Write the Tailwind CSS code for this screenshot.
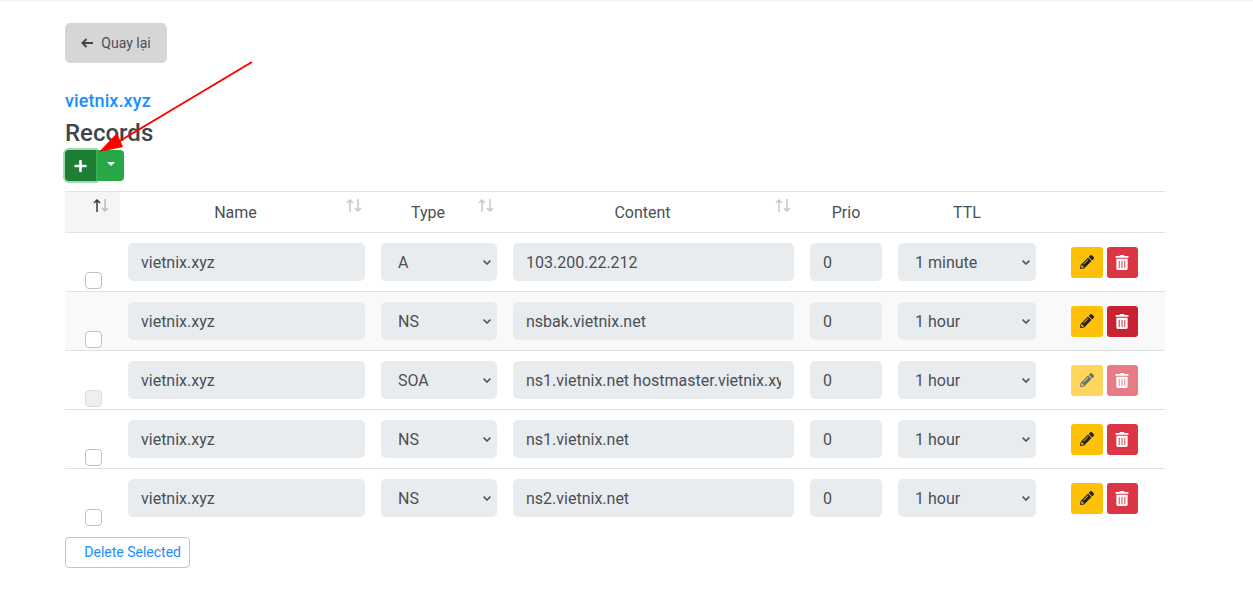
<!doctype html>
<html><head><meta charset="utf-8"><title>Records</title>
<script src="https://cdn.jsdelivr.net/npm/@tailwindcss/browser@4"></script></head>
<body class="bg-white font-['Roboto',sans-serif] text-[16px] text-[#495057] overflow-hidden">
<div class="relative h-[616px] w-[1253px] border-t border-[#f2f2f2] pl-[65px] pr-[88px] pt-[22px]">
  <a class="flex h-10 w-[102px] items-center justify-center gap-[8px] rounded-[5px] border border-[#d6d6d6] bg-[#d6d6d6] text-[14px] text-[#495057]">
    <svg class="h-3 w-3" viewBox="0 0 12 12" fill="none" stroke="#3f464c" stroke-width="2"><path d="M12 6H1.5M5.5 2 1.5 6l4 4"/></svg>
    Quay lại</a>
  <div class="mt-[27px] h-[22px] text-[18px] font-medium leading-[22px] tracking-[0.1px] text-[#1890ff]">vietnix.xyz</div>
  <h2 class="mt-[7px] h-[29px] text-[24px] font-medium leading-[29px] text-[#3e464c]">Records</h2>
  <div class="mt-[2px] flex h-[31px] w-[59px]">
    <button class="z-10 flex h-[31px] w-[31px] items-center justify-center rounded-l-[4px] bg-[#1e7e34] pr-[1px] shadow-[0_0_0_2px_rgba(72,180,97,0.5)]">
      <svg class="h-[14px] w-[13px]" viewBox="0 0 448 512" fill="#fff"><path d="M416 208H272V64c0-17.67-14.33-32-32-32h-32c-17.67 0-32 14.33-32 32v144H32c-17.67 0-32 14.33-32 32v32c0 17.67 14.33 32 32 32h144v144c0 17.67 14.33 32 32 32h32c17.67 0 32-14.33 32-32V304h144c17.67 0 32-14.33 32-32v-32c0-17.67-14.33-32-32-32z"/></svg>
    </button>
    <button class="flex h-[31px] w-[28px] items-center justify-center rounded-r-[4px] bg-[#28a745] pb-[3px] pl-[1px]">
      <span class="h-0 w-0 border-x-[4px] border-t-[4px] border-x-transparent border-t-white"></span>
    </button>
  </div>
  <table class="mt-[10px] w-[1100px] table-fixed border-collapse text-[16px]">
    <colgroup><col class="w-[55px]"><col class="w-[253px]"><col class="w-[132px]"><col class="w-[297px]"><col class="w-[88px]"><col class="w-[154px]"><col class="w-[121px]"></colgroup>
    <thead>
      <tr class="h-[41px] border-y border-[#dee2e6] text-[#495057]">
        <th class="relative bg-[#f5f5f5] font-normal"><svg class="absolute left-[28px] top-[7px]" width="16" height="13" viewBox="0 0 16 13" fill="none" stroke-width="1.5"><path d="M4 13V1M1 4l3-3 3 3" stroke="#343a40"/><path d="M12 0v12M9 9l3 3 3-3" stroke="#bdbdbd"/></svg></th>
        <th class="relative pt-[2px] pr-[22px] font-normal">Name<svg class="absolute left-[226px] top-[7px]" width="16" height="13" viewBox="0 0 16 13" fill="none" stroke="#c8c8c8" stroke-width="1.5"><path d="M4 13V1M1 4l3-3 3 3M12 0v12M9 9l3 3 3-3"/></svg></th>
        <th class="relative pt-[2px] pr-[22px] font-normal">Type<svg class="absolute left-[105px] top-[7px]" width="16" height="13" viewBox="0 0 16 13" fill="none" stroke="#c8c8c8" stroke-width="1.5"><path d="M4 13V1M1 4l3-3 3 3M12 0v12M9 9l3 3 3-3"/></svg></th>
        <th class="relative pt-[2px] pr-[22px] font-normal">Content<svg class="absolute left-[270px] top-[7px]" width="16" height="13" viewBox="0 0 16 13" fill="none" stroke="#c8c8c8" stroke-width="1.5"><path d="M4 13V1M1 4l3-3 3 3M12 0v12M9 9l3 3 3-3"/></svg></th>
        <th class="pt-[2px] font-normal">Prio</th>
        <th class="pt-[2px] font-normal">TTL</th>
        <th></th>
      </tr>
    </thead>
    <tbody>
      <tr class="h-[59px] border-b border-[#dee2e6]">
        <td class="pb-[2px] pl-[20px] align-bottom"><input type="checkbox" class="block h-[17px] w-[17px] appearance-none rounded-[4px] border border-[#bdc1c5] bg-white"></td>
        <td class="px-2"><input value="vietnix.xyz" class="h-[38px] w-full rounded-[5px] bg-[#e9ecef] px-[13px] text-[#495057]"></td>
        <td class="px-2"><div class="relative"><select class="h-[38px] w-full appearance-none rounded-[5px] bg-[#e9ecef] pl-[17px] pt-[2px] text-[#495057]"><option>A</option></select><svg class="pointer-events-none absolute right-[6px] top-[17px] h-[5px] w-2" viewBox="0 0 8 5" fill="none" stroke="#495057" stroke-width="1.5"><path d="M.6.6 4 4l3.4-3.4"/></svg></div></td>
        <td class="px-2"><input value="103.200.22.212" class="h-[38px] w-full rounded-[5px] bg-[#e9ecef] px-[13px] text-[#495057]"></td>
        <td class="px-2"><input value="0" class="h-[38px] w-full rounded-[5px] bg-[#e9ecef] px-[13px] text-[#495057]"></td>
        <td class="px-2"><div class="relative"><select class="h-[38px] w-full appearance-none rounded-[5px] bg-[#e9ecef] pl-[17px] pt-[2px] text-[#495057]"><option>1 minute</option></select><svg class="pointer-events-none absolute right-[6px] top-[17px] h-[5px] w-2" viewBox="0 0 8 5" fill="none" stroke="#495057" stroke-width="1.5"><path d="M.6.6 4 4l3.4-3.4"/></svg></div></td>
        <td class="pl-[27px]"><div class="flex gap-[4px]">
          <button class="flex h-[31px] w-8 items-center justify-center rounded-[3px] bg-[#ffc107]"><svg class="h-[14px] w-[14px]" viewBox="0 0 512 512" fill="#212529"><path d="M497.9 142.1l-46.1 46.1c-4.7 4.7-12.3 4.7-17 0l-111-111c-4.7-4.7-4.7-12.3 0-17l46.1-46.1c18.7-18.7 49.1-18.7 67.9 0l60.1 60.1c18.8 18.7 18.8 49.1 0 67.9zM284.2 99.8L21.6 362.4.4 483.9c-2.9 16.4 11.4 30.6 27.8 27.8l121.5-21.3 262.6-262.6c4.7-4.7 4.7-12.3 0-17l-111-111c-4.8-4.7-12.4-4.7-17.1 0zM124.1 339.9c-5.5-5.5-5.5-14.3 0-19.8l154-154c5.5-5.5 14.3-5.5 19.8 0s5.5 14.3 0 19.8l-154 154c-5.5 5.5-14.3 5.5-19.8 0zM88 424h48v36.3l-64.5 11.3-31.1-31.1L51.7 376H88v48z"/></svg></button>
          <button class="flex h-[31px] w-[31px] items-center justify-center rounded-[3px] bg-[#dc3545] pr-[1px]"><svg class="h-[15px] w-[14px]" viewBox="0 0 448 512" fill="#fff"><path d="M32 464a48 48 0 0 0 48 48h288a48 48 0 0 0 48-48V128H32zm272-256a16 16 0 0 1 32 0v224a16 16 0 0 1-32 0zm-96 0a16 16 0 0 1 32 0v224a16 16 0 0 1-32 0zm-96 0a16 16 0 0 1 32 0v224a16 16 0 0 1-32 0zM432 32H312l-9.4-18.7A24 24 0 0 0 281.1 0H166.8a23.72 23.72 0 0 0-21.4 13.3L136 32H16A16 16 0 0 0 0 48v32a16 16 0 0 0 16 16h416a16 16 0 0 0 16-16V48a16 16 0 0 0-16-16z"/></svg></button>
        </div></td>
      </tr>
      <tr class="h-[59px] border-b border-[#dee2e6] bg-[#f9f9f9]">
        <td class="pb-[2px] pl-[20px] align-bottom"><input type="checkbox" class="block h-[17px] w-[17px] appearance-none rounded-[4px] border border-[#bdc1c5] bg-white"></td>
        <td class="px-2"><input value="vietnix.xyz" class="h-[38px] w-full rounded-[5px] bg-[#e9ecef] px-[13px] text-[#495057]"></td>
        <td class="px-2"><div class="relative"><select class="h-[38px] w-full appearance-none rounded-[5px] bg-[#e9ecef] pl-[17px] pt-[2px] text-[#495057]"><option>NS</option></select><svg class="pointer-events-none absolute right-[6px] top-[17px] h-[5px] w-2" viewBox="0 0 8 5" fill="none" stroke="#495057" stroke-width="1.5"><path d="M.6.6 4 4l3.4-3.4"/></svg></div></td>
        <td class="px-2"><input value="nsbak.vietnix.net" class="h-[38px] w-full rounded-[5px] bg-[#e9ecef] px-[13px] text-[#495057]"></td>
        <td class="px-2"><input value="0" class="h-[38px] w-full rounded-[5px] bg-[#e9ecef] px-[13px] text-[#495057]"></td>
        <td class="px-2"><div class="relative"><select class="h-[38px] w-full appearance-none rounded-[5px] bg-[#e9ecef] pl-[17px] pt-[2px] text-[#495057]"><option>1 hour</option></select><svg class="pointer-events-none absolute right-[6px] top-[17px] h-[5px] w-2" viewBox="0 0 8 5" fill="none" stroke="#495057" stroke-width="1.5"><path d="M.6.6 4 4l3.4-3.4"/></svg></div></td>
        <td class="pl-[27px]"><div class="flex gap-[4px]">
          <button class="flex h-[31px] w-8 items-center justify-center rounded-[3px] bg-[#ffc107]"><svg class="h-[14px] w-[14px]" viewBox="0 0 512 512" fill="#212529"><path d="M497.9 142.1l-46.1 46.1c-4.7 4.7-12.3 4.7-17 0l-111-111c-4.7-4.7-4.7-12.3 0-17l46.1-46.1c18.7-18.7 49.1-18.7 67.9 0l60.1 60.1c18.8 18.7 18.8 49.1 0 67.9zM284.2 99.8L21.6 362.4.4 483.9c-2.9 16.4 11.4 30.6 27.8 27.8l121.5-21.3 262.6-262.6c4.7-4.7 4.7-12.3 0-17l-111-111c-4.8-4.7-12.4-4.7-17.1 0zM124.1 339.9c-5.5-5.5-5.5-14.3 0-19.8l154-154c5.5-5.5 14.3-5.5 19.8 0s5.5 14.3 0 19.8l-154 154c-5.5 5.5-14.3 5.5-19.8 0zM88 424h48v36.3l-64.5 11.3-31.1-31.1L51.7 376H88v48z"/></svg></button>
          <button class="flex h-[31px] w-[31px] items-center justify-center rounded-[3px] bg-[#c82333] pr-[1px]"><svg class="h-[15px] w-[14px]" viewBox="0 0 448 512" fill="#fff"><path d="M32 464a48 48 0 0 0 48 48h288a48 48 0 0 0 48-48V128H32zm272-256a16 16 0 0 1 32 0v224a16 16 0 0 1-32 0zm-96 0a16 16 0 0 1 32 0v224a16 16 0 0 1-32 0zm-96 0a16 16 0 0 1 32 0v224a16 16 0 0 1-32 0zM432 32H312l-9.4-18.7A24 24 0 0 0 281.1 0H166.8a23.72 23.72 0 0 0-21.4 13.3L136 32H16A16 16 0 0 0 0 48v32a16 16 0 0 0 16 16h416a16 16 0 0 0 16-16V48a16 16 0 0 0-16-16z"/></svg></button>
        </div></td>
      </tr>
      <tr class="h-[59px] border-b border-[#dee2e6]">
        <td class="pb-[2px] pl-[20px] align-bottom"><input type="checkbox" class="block h-[17px] w-[17px] appearance-none rounded-[4px] border border-[#dcdcdc] bg-[#efefef]"></td>
        <td class="px-2"><input value="vietnix.xyz" class="h-[38px] w-full rounded-[5px] bg-[#e9ecef] px-[13px] text-[#495057]"></td>
        <td class="px-2"><div class="relative"><select class="h-[38px] w-full appearance-none rounded-[5px] bg-[#e9ecef] pl-[17px] pt-[2px] text-[#495057]"><option>SOA</option></select><svg class="pointer-events-none absolute right-[6px] top-[17px] h-[5px] w-2" viewBox="0 0 8 5" fill="none" stroke="#495057" stroke-width="1.5"><path d="M.6.6 4 4l3.4-3.4"/></svg></div></td>
        <td class="px-2"><input value="ns1.vietnix.net hostmaster.vietnix.xyz" class="h-[38px] w-full rounded-[5px] bg-[#e9ecef] px-[13px] text-[#495057]"></td>
        <td class="px-2"><input value="0" class="h-[38px] w-full rounded-[5px] bg-[#e9ecef] px-[13px] text-[#495057]"></td>
        <td class="px-2"><div class="relative"><select class="h-[38px] w-full appearance-none rounded-[5px] bg-[#e9ecef] pl-[17px] pt-[2px] text-[#495057]"><option>1 hour</option></select><svg class="pointer-events-none absolute right-[6px] top-[17px] h-[5px] w-2" viewBox="0 0 8 5" fill="none" stroke="#495057" stroke-width="1.5"><path d="M.6.6 4 4l3.4-3.4"/></svg></div></td>
        <td class="pl-[27px]"><div class="flex gap-[4px] opacity-65">
          <button class="flex h-[31px] w-8 items-center justify-center rounded-[3px] bg-[#ffc107]"><svg class="h-[14px] w-[14px]" viewBox="0 0 512 512" fill="#212529"><path d="M497.9 142.1l-46.1 46.1c-4.7 4.7-12.3 4.7-17 0l-111-111c-4.7-4.7-4.7-12.3 0-17l46.1-46.1c18.7-18.7 49.1-18.7 67.9 0l60.1 60.1c18.8 18.7 18.8 49.1 0 67.9zM284.2 99.8L21.6 362.4.4 483.9c-2.9 16.4 11.4 30.6 27.8 27.8l121.5-21.3 262.6-262.6c4.7-4.7 4.7-12.3 0-17l-111-111c-4.8-4.7-12.4-4.7-17.1 0zM124.1 339.9c-5.5-5.5-5.5-14.3 0-19.8l154-154c5.5-5.5 14.3-5.5 19.8 0s5.5 14.3 0 19.8l-154 154c-5.5 5.5-14.3 5.5-19.8 0zM88 424h48v36.3l-64.5 11.3-31.1-31.1L51.7 376H88v48z"/></svg></button>
          <button class="flex h-[31px] w-[31px] items-center justify-center rounded-[3px] bg-[#dc3545] pr-[1px]"><svg class="h-[15px] w-[14px]" viewBox="0 0 448 512" fill="#fff"><path d="M32 464a48 48 0 0 0 48 48h288a48 48 0 0 0 48-48V128H32zm272-256a16 16 0 0 1 32 0v224a16 16 0 0 1-32 0zm-96 0a16 16 0 0 1 32 0v224a16 16 0 0 1-32 0zm-96 0a16 16 0 0 1 32 0v224a16 16 0 0 1-32 0zM432 32H312l-9.4-18.7A24 24 0 0 0 281.1 0H166.8a23.72 23.72 0 0 0-21.4 13.3L136 32H16A16 16 0 0 0 0 48v32a16 16 0 0 0 16 16h416a16 16 0 0 0 16-16V48a16 16 0 0 0-16-16z"/></svg></button>
        </div></td>
      </tr>
      <tr class="h-[59px] border-b border-[#dee2e6]">
        <td class="pb-[2px] pl-[20px] align-bottom"><input type="checkbox" class="block h-[17px] w-[17px] appearance-none rounded-[4px] border border-[#bdc1c5] bg-white"></td>
        <td class="px-2"><input value="vietnix.xyz" class="h-[38px] w-full rounded-[5px] bg-[#e9ecef] px-[13px] text-[#495057]"></td>
        <td class="px-2"><div class="relative"><select class="h-[38px] w-full appearance-none rounded-[5px] bg-[#e9ecef] pl-[17px] pt-[2px] text-[#495057]"><option>NS</option></select><svg class="pointer-events-none absolute right-[6px] top-[17px] h-[5px] w-2" viewBox="0 0 8 5" fill="none" stroke="#495057" stroke-width="1.5"><path d="M.6.6 4 4l3.4-3.4"/></svg></div></td>
        <td class="px-2"><input value="ns1.vietnix.net" class="h-[38px] w-full rounded-[5px] bg-[#e9ecef] px-[13px] text-[#495057]"></td>
        <td class="px-2"><input value="0" class="h-[38px] w-full rounded-[5px] bg-[#e9ecef] px-[13px] text-[#495057]"></td>
        <td class="px-2"><div class="relative"><select class="h-[38px] w-full appearance-none rounded-[5px] bg-[#e9ecef] pl-[17px] pt-[2px] text-[#495057]"><option>1 hour</option></select><svg class="pointer-events-none absolute right-[6px] top-[17px] h-[5px] w-2" viewBox="0 0 8 5" fill="none" stroke="#495057" stroke-width="1.5"><path d="M.6.6 4 4l3.4-3.4"/></svg></div></td>
        <td class="pl-[27px]"><div class="flex gap-[4px]">
          <button class="flex h-[31px] w-8 items-center justify-center rounded-[3px] bg-[#ffc107]"><svg class="h-[14px] w-[14px]" viewBox="0 0 512 512" fill="#212529"><path d="M497.9 142.1l-46.1 46.1c-4.7 4.7-12.3 4.7-17 0l-111-111c-4.7-4.7-4.7-12.3 0-17l46.1-46.1c18.7-18.7 49.1-18.7 67.9 0l60.1 60.1c18.8 18.7 18.8 49.1 0 67.9zM284.2 99.8L21.6 362.4.4 483.9c-2.9 16.4 11.4 30.6 27.8 27.8l121.5-21.3 262.6-262.6c4.7-4.7 4.7-12.3 0-17l-111-111c-4.8-4.7-12.4-4.7-17.1 0zM124.1 339.9c-5.5-5.5-5.5-14.3 0-19.8l154-154c5.5-5.5 14.3-5.5 19.8 0s5.5 14.3 0 19.8l-154 154c-5.5 5.5-14.3 5.5-19.8 0zM88 424h48v36.3l-64.5 11.3-31.1-31.1L51.7 376H88v48z"/></svg></button>
          <button class="flex h-[31px] w-[31px] items-center justify-center rounded-[3px] bg-[#dc3545] pr-[1px]"><svg class="h-[15px] w-[14px]" viewBox="0 0 448 512" fill="#fff"><path d="M32 464a48 48 0 0 0 48 48h288a48 48 0 0 0 48-48V128H32zm272-256a16 16 0 0 1 32 0v224a16 16 0 0 1-32 0zm-96 0a16 16 0 0 1 32 0v224a16 16 0 0 1-32 0zm-96 0a16 16 0 0 1 32 0v224a16 16 0 0 1-32 0zM432 32H312l-9.4-18.7A24 24 0 0 0 281.1 0H166.8a23.72 23.72 0 0 0-21.4 13.3L136 32H16A16 16 0 0 0 0 48v32a16 16 0 0 0 16 16h416a16 16 0 0 0 16-16V48a16 16 0 0 0-16-16z"/></svg></button>
        </div></td>
      </tr>
      <tr class="h-[59px]">
        <td class="pb-[2px] pl-[20px] align-bottom"><input type="checkbox" class="block h-[17px] w-[17px] appearance-none rounded-[4px] border border-[#bdc1c5] bg-white"></td>
        <td class="px-2"><input value="vietnix.xyz" class="h-[38px] w-full rounded-[5px] bg-[#e9ecef] px-[13px] text-[#495057]"></td>
        <td class="px-2"><div class="relative"><select class="h-[38px] w-full appearance-none rounded-[5px] bg-[#e9ecef] pl-[17px] pt-[2px] text-[#495057]"><option>NS</option></select><svg class="pointer-events-none absolute right-[6px] top-[17px] h-[5px] w-2" viewBox="0 0 8 5" fill="none" stroke="#495057" stroke-width="1.5"><path d="M.6.6 4 4l3.4-3.4"/></svg></div></td>
        <td class="px-2"><input value="ns2.vietnix.net" class="h-[38px] w-full rounded-[5px] bg-[#e9ecef] px-[13px] text-[#495057]"></td>
        <td class="px-2"><input value="0" class="h-[38px] w-full rounded-[5px] bg-[#e9ecef] px-[13px] text-[#495057]"></td>
        <td class="px-2"><div class="relative"><select class="h-[38px] w-full appearance-none rounded-[5px] bg-[#e9ecef] pl-[17px] pt-[2px] text-[#495057]"><option>1 hour</option></select><svg class="pointer-events-none absolute right-[6px] top-[17px] h-[5px] w-2" viewBox="0 0 8 5" fill="none" stroke="#495057" stroke-width="1.5"><path d="M.6.6 4 4l3.4-3.4"/></svg></div></td>
        <td class="pl-[27px]"><div class="flex gap-[4px]">
          <button class="flex h-[31px] w-8 items-center justify-center rounded-[3px] bg-[#ffc107]"><svg class="h-[14px] w-[14px]" viewBox="0 0 512 512" fill="#212529"><path d="M497.9 142.1l-46.1 46.1c-4.7 4.7-12.3 4.7-17 0l-111-111c-4.7-4.7-4.7-12.3 0-17l46.1-46.1c18.7-18.7 49.1-18.7 67.9 0l60.1 60.1c18.8 18.7 18.8 49.1 0 67.9zM284.2 99.8L21.6 362.4.4 483.9c-2.9 16.4 11.4 30.6 27.8 27.8l121.5-21.3 262.6-262.6c4.7-4.7 4.7-12.3 0-17l-111-111c-4.8-4.7-12.4-4.7-17.1 0zM124.1 339.9c-5.5-5.5-5.5-14.3 0-19.8l154-154c5.5-5.5 14.3-5.5 19.8 0s5.5 14.3 0 19.8l-154 154c-5.5 5.5-14.3 5.5-19.8 0zM88 424h48v36.3l-64.5 11.3-31.1-31.1L51.7 376H88v48z"/></svg></button>
          <button class="flex h-[31px] w-[31px] items-center justify-center rounded-[3px] bg-[#dc3545] pr-[1px]"><svg class="h-[15px] w-[14px]" viewBox="0 0 448 512" fill="#fff"><path d="M32 464a48 48 0 0 0 48 48h288a48 48 0 0 0 48-48V128H32zm272-256a16 16 0 0 1 32 0v224a16 16 0 0 1-32 0zm-96 0a16 16 0 0 1 32 0v224a16 16 0 0 1-32 0zm-96 0a16 16 0 0 1 32 0v224a16 16 0 0 1-32 0zM432 32H312l-9.4-18.7A24 24 0 0 0 281.1 0H166.8a23.72 23.72 0 0 0-21.4 13.3L136 32H16A16 16 0 0 0 0 48v32a16 16 0 0 0 16 16h416a16 16 0 0 0 16-16V48a16 16 0 0 0-16-16z"/></svg></button>
        </div></td>
      </tr>
    </tbody>
  </table>
  <button class="mt-[9px] flex h-[31px] w-[125px] items-center justify-end rounded-[4px] border border-[#c4c4c4] pr-[8px] text-[14px] text-[#1890ff]">Delete Selected</button>
  <svg class="pointer-events-none absolute left-[90px] top-[54px]" width="170" height="105" viewBox="0 0 170 105" fill="none"><path d="M162 7 28 87" stroke="#ff0000" stroke-width="2"/><path d="M9 97 27 78 33 92Z" fill="#ff0000"/></svg>
</div>
</body></html>
